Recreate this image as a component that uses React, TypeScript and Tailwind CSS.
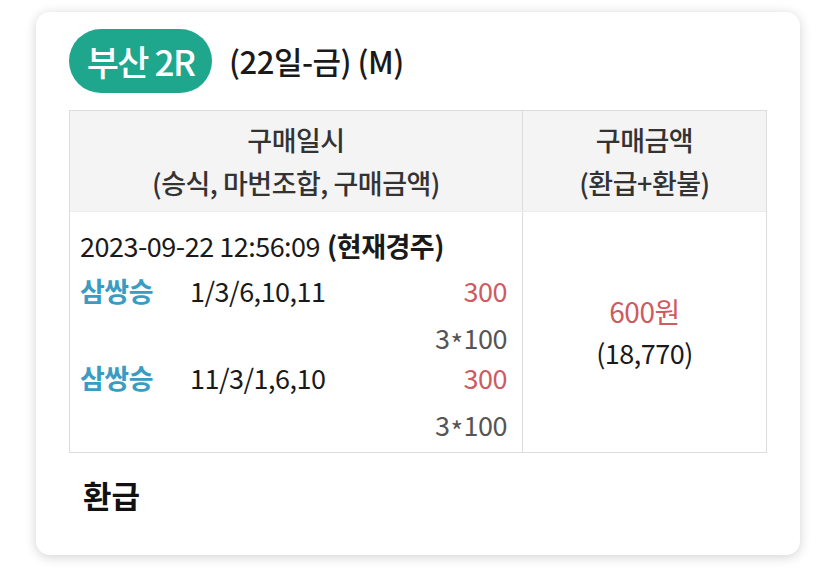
import React from "react";

const font = { fontFamily: '"Noto Sans CJK KR", "Noto Sans", sans-serif' };

function Bet({ name, nums }: { name: string; nums: string }) {
  return (
    <>
      <div className="flex h-[40px] items-center mt-[5px]">
        <span className="w-[110px] font-bold text-[#3a9cc3]">{name}</span>
        <span className="flex-1 text-[#1a1a1a] font-normal">{nums}</span>
        <span className="text-[#cf5a5f] font-normal">300</span>
      </div>
      <div className="flex h-[40px] items-center justify-end mt-[7px] text-[#555] font-normal">
        3<span className="inline-block translate-y-[6px] mx-[1px]">*</span>100
      </div>
    </>
  );
}

export default function App() {
  return (
    <div className="min-h-[577px] w-[835px] bg-white pt-[12px] pl-[36px] font-medium" style={font}>
      <div className="w-[764px] h-[543px] rounded-[14px] bg-white shadow-[0_2px_12px_rgba(0,0,0,0.18)] pt-[17px] px-[33px]">
        <div className="flex items-center gap-[17px]">
          <div className="h-[64px] w-[143px] rounded-full bg-[#1fa78e] flex items-center justify-center text-white text-[35px] tracking-[-1.5px]">
            부산 2R
          </div>
          <div className="text-[31px] text-[#1a1a1a] tracking-[-0.5px]">(22일-금) (M)</div>
        </div>
        <div className="mt-[17px] border border-[#dcdcdc] flex flex-col text-[27px] tracking-[-0.5px]">
          <div className="flex h-[101px] bg-[#f4f4f4] border-b border-[#ececec] text-[#333] leading-[43px]">
            <div className="w-[453px] border-r border-[#dcdcdc] flex flex-col items-center justify-center">
              <div>구매일시</div>
              <div>(승식, 마번조합, 구매금액)</div>
            </div>
            <div className="flex-1 flex flex-col items-center justify-center">
              <div>구매금액</div>
              <div>(환급+환불)</div>
            </div>
          </div>
          <div className="flex h-[240px]">
            <div className="w-[453px] border-r border-[#dcdcdc] pl-[10px] pr-[15px] pt-[14px]">
              <div className="flex h-[40px] items-center text-[#1a1a1a]">
                <span className="font-normal">2023-09-22 12:56:09</span>
                <span className="ml-[7px] font-bold">(현재경주)</span>
              </div>
              <Bet name="삼쌍승" nums="1/3/6,10,11" />
              <div className="-mt-[5px]">
                <Bet name="삼쌍승" nums="11/3/1,6,10" />
              </div>
            </div>
            <div className="flex-1 flex flex-col items-center justify-center leading-[41px]">
              <div className="text-[#cf5a5f] text-[28px] font-normal">600원</div>
              <div className="text-[#1a1a1a] font-normal">(18,770)</div>
            </div>
          </div>
        </div>
        <div className="mt-[19px] pl-[14px] text-[31px] font-bold text-[#111]">환급</div>
      </div>
    </div>
  );
}
